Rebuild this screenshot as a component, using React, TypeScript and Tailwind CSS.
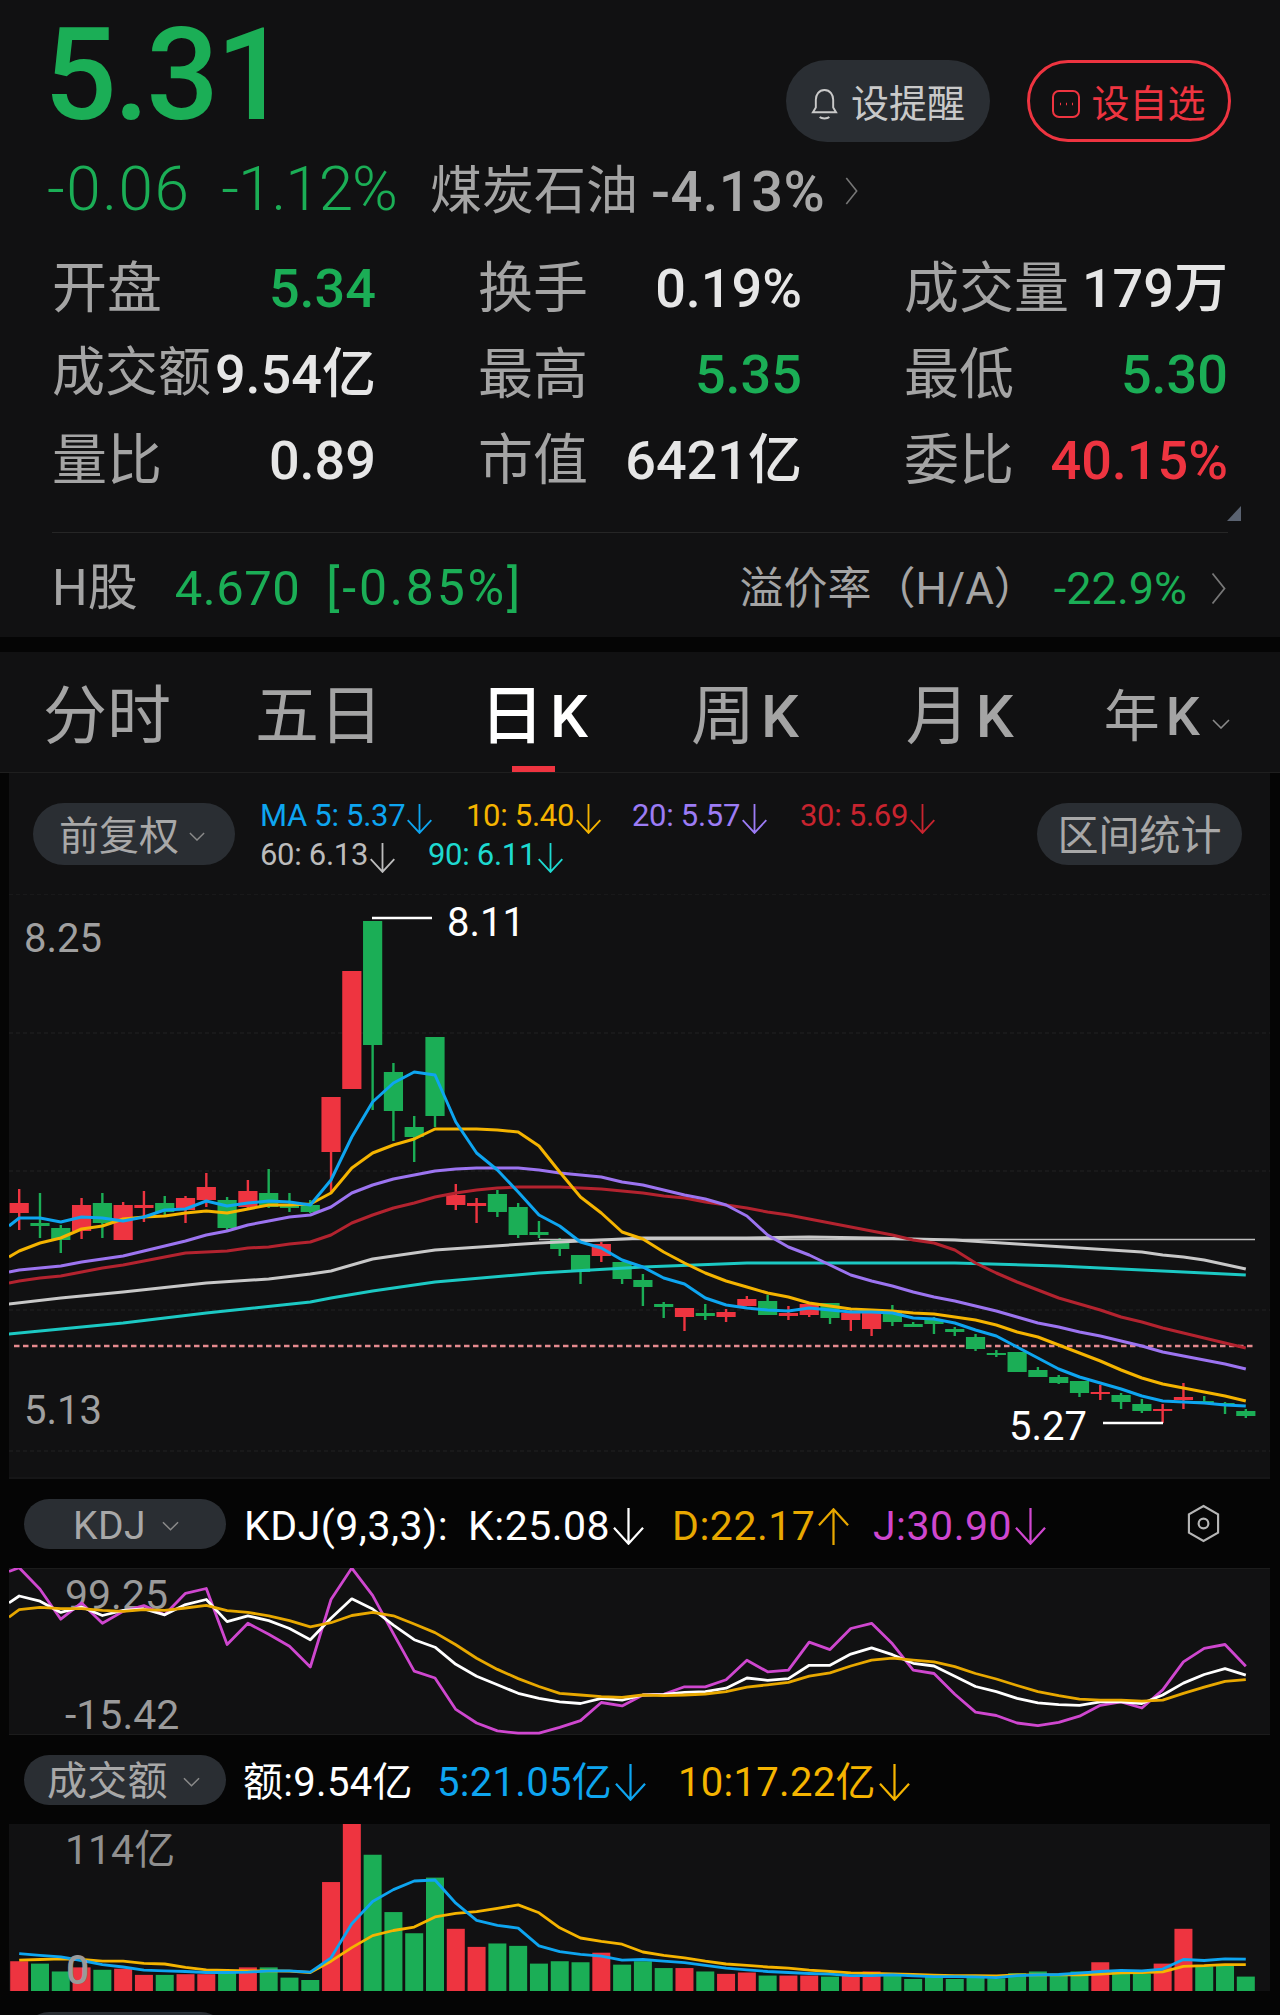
import React from 'react';

const GREEN = '#1bae56';
const RED = '#ee3440';
const X = (i: number) => 19.2 + 20.79 * i;

// candle: color, body top, body bottom, wick high, wick low (page px)
type Candle = ['r' | 'g', number, number, number, number];
const candles: Candle[] = [
  ['r',1203,1213,1189,1230],['g',1223,1226,1193,1238],['g',1228,1240,1225,1253],['r',1205,1231,1198,1239],
  ['g',1203,1223,1193,1238],['r',1205,1240,1202,1240],['r',1205,1208,1191,1222],['g',1203,1212,1196,1215],
  ['r',1198,1210,1196,1223],['r',1187,1200,1173,1207],['g',1200,1228,1197,1231],['r',1191,1207,1180,1210],
  ['g',1193,1207,1169,1208],['g',1204,1208,1193,1212],['g',1205,1212,1200,1213],['r',1097,1152,1097,1193],
  ['r',971,1089,971,1089],['g',921,1045,921,1110],['g',1072,1111,1063,1141],['g',1127,1137,1116,1162],
  ['g',1037,1116,1037,1127],['r',1195,1205,1184,1210],['r',1203,1206,1198,1223],['g',1194,1212,1190,1217],
  ['g',1207,1235,1203,1238],['g',1232,1235,1221,1238],['g',1240,1249,1238,1256],['g',1255,1272,1255,1284],
  ['r',1244,1256,1242,1262],['g',1262,1279,1262,1284],['g',1280,1287,1274,1306],['g',1304,1307,1302,1318],
  ['r',1308,1317,1308,1331],['g',1313,1316,1304,1320],['r',1312,1317,1309,1322],['r',1299,1306,1296,1306],
  ['g',1301,1315,1295,1315],['r',1313,1316,1306,1320],['r',1304,1315,1302,1317],['g',1303,1318,1303,1324],
  ['r',1313,1320,1308,1331],['r',1313,1329,1313,1336],['g',1313,1322,1305,1326],['g',1324,1327,1322,1327],
  ['g',1320,1324,1317,1334],['g',1329,1332,1327,1336],['g',1337,1349,1334,1351],['g',1353,1355,1350,1357],
  ['g',1352,1372,1352,1372],['g',1370,1377,1367,1377],['g',1377,1383,1375,1384],['g',1381,1393,1381,1397],
  ['r',1392,1394,1385,1400],['g',1395,1402,1393,1409],['g',1404,1411,1399,1413],['r',1409,1411,1404,1423],
  ['r',1397,1400,1383,1409],['g',1401,1403,1396,1403],['g',1403,1405,1402,1414],['g',1411,1416,1409,1418],
];

const ma5 = [1218,1218,1222,1217,1218,1221,1217,1210,1209,1201,1206,1203,1201,1202,1205,1180,1137,1102,1083,1072,1075,1122,1153,1170,1192,1215,1226,1242,1248,1260,1267,1278,1284,1298,1305,1308,1310,1311,1308,1310,1312,1312,1313,1318,1319,1323,1330,1336,1347,1358,1369,1377,1383,1389,1396,1401,1402,1403,1405,1406];
const ma10 = [1251,1243,1238,1229,1226,1219,1217,1216,1213,1211,1213,1209,1205,1205,1204,1193,1168,1153,1145,1139,1129,1129,1129,1130,1132,1146,1172,1197,1213,1232,1239,1252,1263,1273,1281,1287,1293,1297,1303,1306,1309,1310,1311,1313,1314,1317,1320,1325,1332,1337,1345,1353,1361,1370,1378,1384,1388,1392,1396,1401];
const ma20 = [1270,1268,1266,1262,1259,1256,1251,1246,1241,1235,1231,1225,1221,1217,1215,1207,1193,1185,1179,1175,1171,1169,1168,1168,1168,1170,1173,1175,1177,1182,1185,1190,1195,1199,1205,1216,1235,1247,1255,1265,1275,1281,1286,1292,1297,1301,1306,1311,1317,1323,1327,1332,1336,1341,1346,1352,1356,1360,1364,1369];
const ma30 = [1281,1278,1276,1272,1268,1265,1261,1257,1253,1252,1251,1248,1247,1244,1242,1235,1223,1215,1208,1203,1197,1193,1190,1188,1187,1187,1187,1188,1189,1191,1193,1196,1198,1202,1205,1208,1212,1215,1219,1223,1227,1231,1235,1240,1243,1250,1263,1273,1282,1290,1298,1304,1310,1317,1322,1328,1333,1338,1343,1348];
const ma60: [number, number][] = [[-0.5,1304],[2,1298],[5,1292],[9,1283],[12,1279],[14,1274],[15,1271],[17,1259],[20,1250],[25,1243],[30,1238],[35,1238],[38,1237],[41,1238],[45,1240],[48,1244],[51,1248],[54,1252],[55,1255],[56,1257],[57,1260],[59,1269]];
const ma90: [number, number][] = [[-0.5,1334],[2,1329],[5,1323],[9,1313],[14,1302],[15,1298],[17,1291],[20,1282],[25,1273],[30,1267],[35,1263],[40,1263],[45,1263],[50,1266],[54,1270],[59,1275]];

// KDJ and volume values are read off the panels, converted to page px below
const kY = (v: number) => 1480 + v / 2.93;
const kLine = [340,355,388,372,397,382,378,395,365,350,415,398,412,435,468,405,348,378,425,468,490,540,575,600,625,640,650,655,640,645,630,628,622,620,610,580,587,582,543,543,510,492,512,537,545,575,605,620,640,653,658,660,650,650,655,630,595,570,553,572];
const dLine = [380,373,377,377,382,385,380,382,375,367,383,388,398,412,430,418,397,388,398,422,447,483,522,555,582,605,625,630,635,637,630,632,630,627,620,607,600,593,575,565,545,528,522,528,533,547,567,583,602,620,632,642,645,645,648,645,625,607,590,585];
const jLine = [257,320,408,360,420,385,368,395,332,318,482,420,452,487,548,350,258,338,450,560,580,672,712,735,742,742,725,705,652,662,630,628,606,606,585,528,562,557,475,497,435,420,480,557,567,628,680,690,712,720,710,692,660,650,668,615,533,493,482,546];
const volBars: ['r' | 'g', number][] = [
  ['r',1410],['g',1417],['g',1440],['r',1428],['g',1435],['r',1432],['r',1450],['g',1450],['r',1448],['r',1448],
  ['g',1440],['r',1428],['g',1428],['g',1458],['g',1465],['r',1178],['r',1007],['g',1098],['g',1266],['g',1328],
  ['g',1165],['r',1315],['r',1368],['g',1358],['g',1365],['g',1417],['g',1410],['g',1413],['r',1385],['g',1420],
  ['g',1410],['g',1430],['r',1430],['g',1440],['r',1447],['r',1443],['g',1452],['r',1452],['r',1452],['g',1455],
  ['r',1452],['r',1440],['g',1452],['g',1462],['g',1455],['g',1462],['g',1458],['g',1460],['g',1445],['g',1440],
  ['g',1450],['g',1440],['r',1413],['g',1445],['g',1447],['r',1417],['r',1315],['g',1425],['g',1423],['g',1455],
];
const volBlue = [1388,1393,1397,1408,1420,1427,1436,1438,1440,1443,1443,1442,1438,1438,1442,1400,1300,1235,1200,1175,1172,1240,1290,1305,1313,1365,1382,1390,1395,1407,1405,1410,1414,1422,1430,1435,1440,1443,1446,1448,1452,1452,1450,1453,1455,1455,1456,1458,1452,1450,1449,1445,1440,1437,1438,1433,1405,1408,1403,1404];
const volYellow = [1407,1405,1403,1405,1410,1410,1416,1418,1428,1435,1437,1438,1438,1439,1443,1410,1370,1335,1320,1310,1280,1270,1265,1255,1245,1268,1312,1342,1352,1360,1383,1393,1400,1410,1418,1422,1427,1430,1436,1440,1444,1446,1447,1449,1451,1452,1452,1453,1450,1450,1450,1450,1448,1444,1443,1441,1425,1423,1420,1420];

const pts = (ys: number[], conv: (v: number) => number = (v) => v) =>
  ys.map((y, i) => `${X(i).toFixed(1)},${conv(y).toFixed(1)}`).join(' ');
const sparse = (ps: [number, number][]) => ps.map(([i, y]) => `${X(i).toFixed(1)},${y}`).join(' ');

const Chevron = ({ className = '', color = '#777' }: { className?: string; color?: string }) => (
  <svg viewBox="1 1 10 22" className={className} fill="none" stroke={color} strokeWidth="1.2">
    <path d="M2 2l8 10-8 10" />
  </svg>
);

const Caret = ({ className = '' }: { className?: string }) => (
  <svg viewBox="0 0 18 10" className={className} fill="none" stroke="#8a8a8a" strokeWidth="1.6">
    <path d="M1 1l8 8 8-8" />
  </svg>
);

const Arrow = ({ color, up = false, className = '' }: { color: string; up?: boolean; className?: string }) => (
  <svg viewBox="0 0 24 28" className={`${className} ${up ? 'rotate-180' : ''}`} fill="none" stroke={color} strokeWidth="1.7">
    <path d="M12 0v27M1 15l11 12 11-12" />
  </svg>
);

const Stat = ({ label, value, color = '#e6e6e6', tight = false }: { label: string; value: string; color?: string; tight?: boolean }) => (
  <div className="flex items-center justify-between h-[86px]">
    <span className={`text-[#a4a4a4] ${tight ? 'text-[53px]' : 'text-[55px]'}`}>{label}</span>
    <span className="text-[54px] font-medium" style={{ color }}>{value}</span>
  </div>
);

const Tab = ({ label, k, active, small, className = '' }: { label: string; k?: string; active?: boolean; small?: boolean; className?: string }) => (
  <div className={`flex items-center whitespace-nowrap leading-none ${small ? 'text-[56px]' : 'text-[64px]'} ${active ? 'text-white font-medium' : 'text-[#a4a4a4]'} ${className}`}>
    {label}
    {k && <span className={`ml-[6px] font-medium ${small ? 'text-[54px]' : 'text-[60px]'}`}>{k}</span>}
  </div>
);

const Pill = ({ children, className = '' }: { children: React.ReactNode; className?: string }) => (
  <div className={`flex items-center bg-[#2a2e33] rounded-full text-[#a8a8a8] whitespace-nowrap ${className}`}>{children}</div>
);

const Legend = ({ text, color, className = '' }: { text: string; color: string; className?: string }) => (
  <div className={`flex items-center whitespace-nowrap ${className}`} style={{ color }}>
    {text}
    <Arrow color={color} className="w-[27px] h-[30px] mt-[6px] ml-[1px]" />
  </div>
);

const Reading = ({ text, color, up, className = '' }: { text: string; color: string; up?: boolean; className?: string }) => (
  <div className={`flex items-center whitespace-nowrap ${className}`} style={{ color }}>
    {text}
    <Arrow color={color} up={up} className="w-[33px] h-[37px] ml-[2px]" />
  </div>
);

export default function App() {
  return (
    <div className="w-[1280px] h-[2015px] overflow-hidden bg-[#050505] [font-family:Roboto,'Noto_Sans_CJK_SC',sans-serif]">
      {/* quote panel */}
      <section className="relative h-[637px] bg-[#111112]">
        <div className="flex justify-between h-[150px] pl-[44px] pr-[49px]">
          <div className="text-[128px] leading-[150px] tracking-[-3px] font-medium text-[#1bae56]">5.31</div>
          <div className="flex gap-[37px] pt-[60px]">
            <div className="flex items-center justify-center gap-[13px] w-[204px] h-[82px] pt-[6px] rounded-[41px] bg-[#2a2e33] text-[38px] text-[#c9c9c9]">
              <svg viewBox="0 0 28 34" className="w-[27px] h-[33px]" fill="none" stroke="#c9c9c9" strokeWidth="2">
                <path d="M14 2c-6 0-9 5-9 10v8l-3 5h24l-3-5v-8c0-5-3-10-9-10z" />
                <path d="M9 30c2 2 8 2 10 0" />
              </svg>
              设提醒
            </div>
            <div className="flex items-center justify-center gap-[11px] w-[204px] h-[82px] pt-[6px] rounded-[41px] border-[3px] border-[#ee3440] text-[38px] text-[#ee3440]">
              <svg viewBox="0 0 28 28" className="w-[28px] h-[28px]" fill="none" stroke="#ee3440" strokeWidth="2">
                <rect x="1" y="1" width="26" height="26" rx="6" />
                <path d="M8 14h1M14 14h1M20 14h1" strokeWidth="2.4" />
              </svg>
              设自选
            </div>
          </div>
        </div>
        <div className="flex items-center h-[80px] pl-[47px] whitespace-nowrap">
          <span className="text-[62px] font-light text-[#1bae56] tracking-[1.5px] -mt-[4px]">-0.06</span>
          <span className="text-[62px] font-light text-[#1bae56] ml-[31px] tracking-[-1px] -mt-[4px]">-1.12%</span>
          <span className="text-[52px] text-[#a4a4a4] ml-[33px] mt-[4px]">煤炭石油</span>
          <span className="text-[56px] font-medium text-[#a8a8a8] ml-[13px] mt-[4px] tracking-[0.5px]">-4.13%</span>
          <Chevron className="w-[13px] h-[30px] ml-[20px] mt-[2px]" />
        </div>
        <div className="grid grid-cols-3 gap-x-[102px] px-[52px] mt-[15px]">
          <Stat label="开盘" value="5.34" color="#1bae56" />
          <Stat label="换手" value="0.19%" />
          <Stat label="成交量" value="179万" />
          <Stat label="成交额" value="9.54亿" tight />
          <Stat label="最高" value="5.35" color="#1bae56" />
          <Stat label="最低" value="5.30" color="#1bae56" />
          <Stat label="量比" value="0.89" />
          <Stat label="市值" value="6421亿" />
          <Stat label="委比" value="40.15%" color="#ee3440" />
        </div>
        <div className="absolute left-[1227px] top-[506px] w-[14px] h-[15px] bg-[#5a6270] [clip-path:polygon(100%_0,100%_100%,0_100%)]" />
        <div className="flex items-center h-[104px] mt-[29px] mx-[52px] pr-[2px] pt-[8px] border-t border-[#262626] whitespace-nowrap">
          <span className="text-[50px] text-[#a4a4a4]">H股</span>
          <span className="text-[49px] text-[#1bae56] ml-[37px] tracking-[0.5px]">4.670</span>
          <span className="text-[50px] text-[#1bae56] ml-[26px] tracking-[2.8px]">[-0.85%]</span>
          <span className="text-[44px] text-[#a4a4a4] ml-auto">溢价率（H/A）</span>
          <span className="text-[45px] text-[#1bae56] ml-[16px]">-22.9%</span>
          <Chevron className="w-[15px] h-[33px] ml-[24px]" />
        </div>
      </section>

      {/* period tabs */}
      <nav className="relative flex items-center h-[121px] mt-[15px] pl-[43px] pt-[10px] bg-[#111112] border-b border-[#1f1f1f]">
        <Tab label="分时" />
        <Tab label="五日" className="ml-[84px]" />
        <Tab label="日" k="K" active className="ml-[97px]" />
        <Tab label="周" k="K" className="ml-[103px]" />
        <Tab label="月" k="K" className="ml-[107px]" />
        <Tab label="年" k="K" small className="ml-[90px]" />
        <Caret className="w-[18px] h-[10px] ml-[12px] mt-[14px]" />
        <div className="absolute left-[512px] bottom-0 w-[43px] h-[6px] bg-[#ee3440]" />
      </nav>

      {/* main chart */}
      <section className="ml-[9px] w-[1261px] h-[706px] bg-[#111112]">
        <div className="relative h-[121px]">
          <div className="flex pt-[30px] pl-[24px] pr-[28px]">
            <Pill className="w-[202px] h-[62px] pl-[26px] pt-[5px] text-[40px]">
              前复权
              <Caret className="w-[16px] h-[9px] ml-[10px]" />
            </Pill>
            <div className="ml-[25px] -mt-[7px] flex flex-col text-[31px] leading-[39px] tracking-[-0.3px]">
              <div className="flex items-center">
                <Legend text="MA 5: 5.37" color="#0ea5f0" className="w-[206px]" />
                <Legend text="10: 5.40" color="#f5b400" className="w-[166px]" />
                <Legend text="20: 5.57" color="#9c7cf5" className="w-[168px]" />
                <Legend text="30: 5.69" color="#c8242f" />
              </div>
              <div className="flex items-center">
                <Legend text="60: 6.13" color="#bcbcbc" className="w-[168px]" />
                <Legend text="90: 6.11" color="#1ed9d0" />
              </div>
            </div>
            <Pill className="ml-auto w-[205px] h-[62px] pt-[5px] justify-center text-[41px]">区间统计</Pill>
          </div>
        </div>
        <div className="relative h-[585px]">
          <svg viewBox="9 894 1261 585" className="block w-[1261px] h-[585px]">
            {[894, 1033, 1171, 1310, 1451].map((y) => (
              <line key={y} x1="9" x2="1270" y1={y} y2={y} stroke="#222" strokeWidth="1" strokeDasharray="4 3" />
            ))}
            <line x1="9" x2="1270" y1="1478" y2="1478" stroke="#1d1d1d" />
            <line x1="14" x2="1255" y1="1346" y2="1346" stroke="#e58a8e" strokeWidth="2.4" strokeDasharray="5.5 3.5" />
            {candles.map(([c, top, bot, hi, lo], i) => {
              const fill = c === 'r' ? RED : GREEN;
              return (
                <g key={i} fill={fill}>
                  <rect x={X(i) - 1.2} y={hi} width="2.4" height={lo - hi} />
                  <rect x={X(i) - 9.6} y={top} width="19.2" height={bot - top} />
                </g>
              );
            })}
            <line x1="539" x2="1255" y1="1239.5" y2="1239.5" stroke="#bdbdbd" strokeWidth="1.6" />
            <g fill="none" strokeWidth="3" strokeLinejoin="round">
              <polyline points={sparse(ma90)} stroke="#1cc9c4" />
              <polyline points={sparse(ma60)} stroke="#c8c8c8" />
              <polyline points={`9,1283 ${pts(ma30)}`} stroke="#b3232f" />
              <polyline points={`9,1272 ${pts(ma20)}`} stroke="#9c74f0" />
              <polyline points={`9,1257 ${pts(ma10)}`} stroke="#f5b400" />
              <polyline points={`9,1226 ${pts(ma5)}`} stroke="#0ea5f0" />
            </g>
            <line x1="372" x2="432" y1="918" y2="918" stroke="#fff" strokeWidth="2.4" />
            <line x1="1103" x2="1163" y1="1423" y2="1423" stroke="#fff" strokeWidth="2.4" />
          </svg>
          <span className="absolute left-[15px] top-[25px] text-[40px] leading-[40px] text-[#a0a0a0]">8.25</span>
          <span className="absolute left-[15px] top-[497px] text-[40px] leading-[40px] text-[#a0a0a0]">5.13</span>
          <span className="absolute left-[438px] top-[9px] text-[40px] leading-[40px] text-white">8.11</span>
          <span className="absolute left-[1000px] top-[513px] text-[40px] leading-[40px] text-white">5.27</span>
        </div>
      </section>

      {/* KDJ */}
      <div className="flex items-center h-[89px] pl-[24px] text-[41px] tracking-[0.5px]">
        <Pill className="w-[202px] h-[50px] pl-[49px] pt-[5px] text-[39px]">
          KDJ
          <Caret className="w-[17px] h-[10px] ml-[16px]" />
        </Pill>
        <div className="flex items-center pt-[6px]">
          <span className="text-white ml-[18px] w-[224px] whitespace-nowrap">KDJ(9,3,3):</span>
          <Reading text="K:25.08" color="#fff" className="w-[204px]" />
          <Reading text="D:22.17" color="#e8a800" up className="w-[201px]" />
          <Reading text="J:30.90" color="#cf47cf" className="w-[313px]" />
          <svg viewBox="0 0 36 40" className="w-[35px] h-[39px] -mt-[6px]" fill="none" stroke="#b5b5b5" strokeWidth="2.2">
            <path d="M18 2l15 8.5v19L18 38 3 29.5v-19z" />
            <circle cx="18" cy="20" r="5" />
          </svg>
        </div>
      </div>
      <div className="relative ml-[9px] w-[1261px] h-[167px] bg-[#111112] border-y border-[#1c1c1c]">
        <span className="absolute left-[56px] top-[6px] text-[41px] leading-[40px] text-[#9a9a9a]">99.25</span>
        <span className="absolute left-[56px] top-[126px] text-[41px] leading-[40px] text-[#9a9a9a]">-15.42</span>
        <svg viewBox="9 1568 1261 167" className="absolute left-0 -top-px w-[1261px] h-[167px]">
          <g fill="none" strokeWidth="2.8" strokeLinejoin="round">
            <polyline points={`9,${kY(268)} ${pts(jLine, kY)}`} stroke="#cf47cf" />
            <polyline points={`9,${kY(360)} ${pts(kLine, kY)}`} stroke="#fff" />
            <polyline points={`9,${kY(402)} ${pts(dLine, kY)}`} stroke="#e8a800" />
          </g>
        </svg>
      </div>

      {/* turnover */}
      <div className="flex items-center h-[89px] pl-[24px] text-[40px] tracking-[0.3px]">
        <Pill className="w-[202px] h-[50px] pl-[23px] pt-[5px] text-[40px]">
          成交额
          <Caret className="w-[17px] h-[10px] ml-[15px]" />
        </Pill>
        <div className="flex items-center pt-[6px]">
          <span className="text-white ml-[17px] w-[194px] whitespace-nowrap">额:9.54亿</span>
          <Reading text="5:21.05亿" color="#0ea5f0" className="w-[241px]" />
          <Reading text="10:17.22亿" color="#f5b400" />
        </div>
      </div>
      <div className="relative ml-[9px] w-[1261px] h-[167px] bg-[#111112]">
        <span className="absolute left-[56px] top-[6px] text-[41px] leading-[40px] text-[#8f8f8f]">114亿</span>
        <svg viewBox="9 1824 1261 167" className="absolute left-0 top-0 w-[1261px] h-[167px]">
          {volBars.map(([c, v], i) => {
            const top = kY(v);
            return <rect key={i} x={Math.max(9, X(i) - 9)} y={top} width="18" height={1991 - top} fill={c === 'r' ? RED : GREEN} />;
          })}
          <g fill="none" strokeWidth="2.8" strokeLinejoin="round">
            <polyline points={pts(volYellow, kY)} stroke="#f5b400" />
            <polyline points={pts(volBlue, kY)} stroke="#0ea5f0" />
          </g>
        </svg>
        <span className="absolute left-[57px] top-[126px] text-[41px] leading-[40px] font-medium text-[#9a9a9a]">0</span>
      </div>
      <div className="ml-[24px] mt-[21px] w-[202px] h-[50px] rounded-full bg-[#2a2e33]" />
    </div>
  );
}
